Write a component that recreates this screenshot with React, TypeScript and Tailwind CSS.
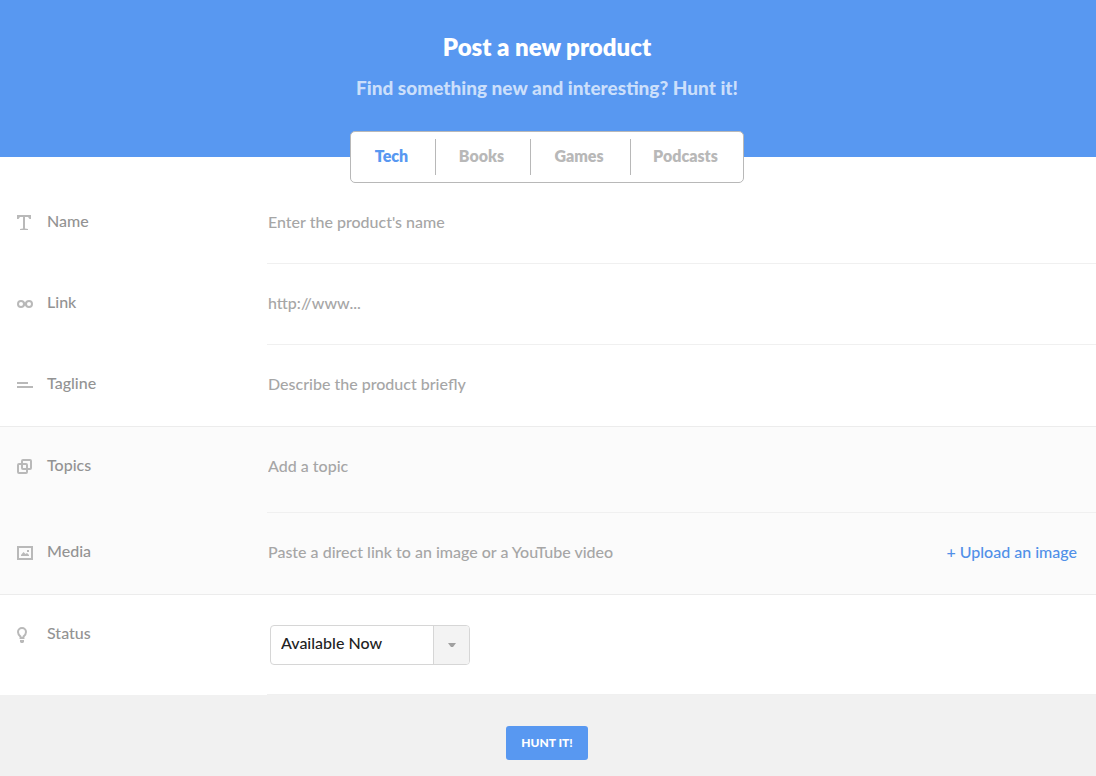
import React, { useState } from 'react';
import clsx from 'clsx';

interface Tab {
  id: string;
  label: string;
  width: string;
}

const TABS: Tab[] = [
  { id: 'tech', label: 'Tech', width: 'w-[85px]' },
  { id: 'books', label: 'Books', width: 'w-[95px]' },
  { id: 'games', label: 'Games', width: 'w-[100px]' },
  { id: 'podcasts', label: 'Podcasts', width: 'w-[112px]' },
];

const inputClass =
  'block h-6 w-full min-w-0 flex-1 bg-transparent pb-[2px] text-base text-[#222] placeholder:text-[#a6a6a6] outline-none';

function Icon({ children }: { children: React.ReactNode }) {
  return (
    <svg width="16" height="16" viewBox="0 0 16 16" fill="none" aria-hidden="true" className="shrink-0 text-[#b9b9b9]">
      {children}
    </svg>
  );
}

const NameIcon = () => (
  <Icon>
    <path d="M0 0h14v4h-1.500L11 2H8v11.500l3 .5v1H3v-1l3-.5V2H3L1.500 4H0z" fill="currentColor" />
  </Icon>
);

const LinkIcon = () => (
  <Icon>
    <circle cx="4" cy="8" r="3" stroke="currentColor" strokeWidth="2" />
    <circle cx="12" cy="8" r="3" stroke="currentColor" strokeWidth="2" />
    <path d="M6.500 6.300l3 3.400M6.500 9.700l3-3.400" stroke="currentColor" strokeWidth="1.500" />
  </Icon>
);

const TaglineIcon = () => (
  <Icon>
    <path d="M0 5h11v2H0zM0 9h16v2H0z" fill="currentColor" />
  </Icon>
);

const TopicsIcon = () => (
  <Icon>
    <rect x="5" y="1" width="9" height="9" rx="1" stroke="currentColor" strokeWidth="2" />
    <rect x="1" y="5" width="9" height="9" rx="1" stroke="currentColor" strokeWidth="2" />
  </Icon>
);

const MediaIcon = () => (
  <Icon>
    <rect x="1" y="2" width="14" height="12" stroke="currentColor" strokeWidth="2" />
    <path d="M4 11V10l2.500-3 2 2 1.500-1 2 2v1z" fill="currentColor" />
    <rect x="10" y="5" width="2" height="2" fill="currentColor" />
  </Icon>
);

const StatusIcon = () => (
  <Icon>
    <path
      d="M3.500 11V9.600C2 8.400 1 7 1 5a4 4 0 0 1 8 0c0 2-1 3.400-2.500 4.600V11z"
      stroke="currentColor"
      strokeWidth="2"
    />
    <path d="M3 13h4v2L6 16H4l-1-1z" fill="currentColor" />
  </Icon>
);

interface RowProps {
  id: string;
  label: string;
  icon: React.ReactNode;
  className?: string;
  fieldClassName?: string;
  children: React.ReactNode;
}

function Row({ id, label, icon, className = 'py-7', fieldClassName = 'border-b border-[#f0f0f0]', children }: RowProps) {
  return (
    <div className="flex">
      <label htmlFor={id} className="mt-7 flex h-6 w-[267px] shrink-0 items-center gap-[14px] pl-[17px] text-[#939393]">
        {icon}
        <span className="pb-1 leading-6">{label}</span>
      </label>
      <div className={clsx('flex min-w-0 flex-1 items-center pl-px', className, fieldClassName)}>{children}</div>
    </div>
  );
}

export default function App() {
  const [activeTab, setActiveTab] = useState('tech');
  const [status, setStatus] = useState('Available Now');

  return (
    <form
      onSubmit={e => e.preventDefault()}
      className="flex min-h-screen flex-col bg-white font-['Lato',sans-serif] text-base font-medium"
    >
      <header className="flex flex-col items-center bg-[#5898f1] pt-[31px] pr-[2px] text-center">
        <h1 className="text-2xl leading-8 font-extrabold text-white">Post a new product</h1>
        <p className="mt-[13px] text-[19px] leading-6 font-black text-[#cbdffb]">
          Find something new and interesting? Hunt it!
        </p>
        <div role="tablist" className="-mb-[26px] mt-[31px] flex rounded-[5px] border border-[#b8b8b8] bg-white py-[7px]">
          {TABS.map(tab => (
            <button
              key={tab.id}
              type="button"
              role="tab"
              aria-selected={activeTab === tab.id}
              onClick={() => setActiveTab(tab.id)}
              className={clsx(
                'h-9 border-r border-[#b8b8b8] pr-[3px] pb-[2px] font-extrabold last:border-r-0',
                tab.width,
                activeTab === tab.id ? 'text-[#5898f1]' : 'text-[#b8b8b8]'
              )}
            >
              {tab.label}
            </button>
          ))}
        </div>
      </header>

      <section className="pt-[26px]">
        <Row id="name" label="Name" icon={<NameIcon />}>
          <input id="name" type="text" placeholder="Enter the product's name" className={inputClass} />
        </Row>
        <Row id="link" label="Link" icon={<LinkIcon />}>
          <input id="link" type="text" placeholder="http://www..." className={inputClass} />
        </Row>
        <Row id="tagline" label="Tagline" icon={<TaglineIcon />} className="pt-7 pb-[29px]" fieldClassName="">
          <input id="tagline" type="text" placeholder="Describe the product briefly" className={inputClass} />
        </Row>
      </section>

      <section className="border-y border-[#ececec] bg-[#fbfbfb]">
        <Row id="topics" label="Topics" icon={<TopicsIcon />} className="pt-7 pb-[33px]">
          <input id="topics" type="text" placeholder="Add a topic" className={inputClass} />
        </Row>
        <Row id="media" label="Media" icon={<MediaIcon />} className="pt-7 pb-[29px]" fieldClassName="">
          <input
            id="media"
            type="text"
            placeholder="Paste a direct link to an image or a YouTube video"
            className={inputClass}
          />
          <a href="#upload" className="h-6 shrink-0 pr-[19px] leading-[22px] text-[#5190e8]">
            + Upload an image
          </a>
        </Row>
      </section>

      <section>
        <Row id="status" label="Status" icon={<StatusIcon />} className="pt-[30px] pb-[29px]">
          <div className="relative ml-[2px] h-10 w-[200px]">
            <select
              id="status"
              value={status}
              onChange={e => setStatus(e.target.value)}
              className="h-full w-full appearance-none rounded border border-[#d6d6d6] bg-white pr-10 pb-1 pl-[10px] text-[#222] outline-none"
            >
              <option>Available Now</option>
              <option>Coming Soon</option>
            </select>
            <span className="pointer-events-none absolute inset-y-px right-px flex w-9 items-center justify-center rounded-r-[3px] border-l border-[#d6d6d6] bg-[#f3f3f3]">
              <svg width="8" height="4" viewBox="0 0 8 4" aria-hidden="true">
                <path d="M0 0h8L5 4H3z" fill="#a0a0a0" />
              </svg>
            </span>
          </div>
        </Row>
      </section>

      <footer className="flex flex-1 items-start justify-center bg-[#f1f1f1] pt-[31px] pr-[2px] pb-4">
        <button
          type="submit"
          className="h-[34px] w-[82px] rounded-[3px] bg-[#5898f1] pb-px text-xs font-black text-white"
        >
          HUNT IT!
        </button>
      </footer>
    </form>
  );
}
